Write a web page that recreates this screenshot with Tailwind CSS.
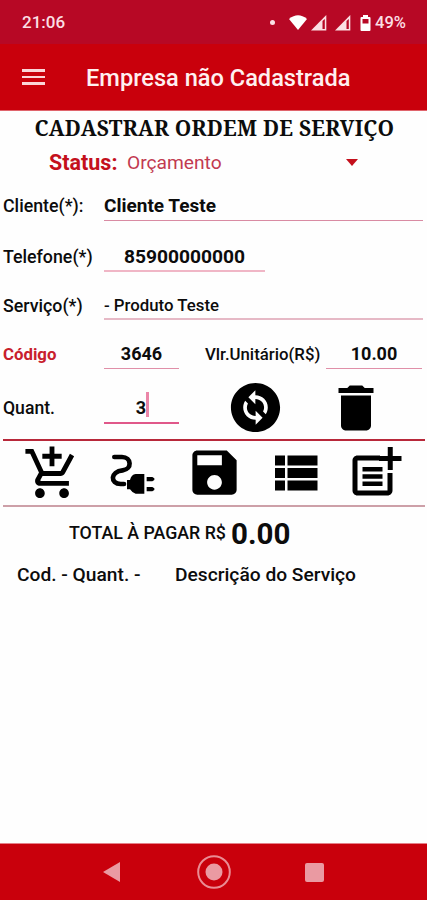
<!DOCTYPE html>
<html lang="pt-BR">
<head>
<meta charset="utf-8">
<title>Ordem de Serviço</title>
<script src="https://cdn.jsdelivr.net/npm/@tailwindcss/browser@4"></script>
</head>
<body class="bg-white">
<div class="flex h-[900px] w-[427px] flex-col overflow-hidden whitespace-nowrap bg-[#fefefe] font-['Roboto',sans-serif] text-[18px] font-medium text-[#0c0c0c]">
  <!-- status bar -->
  <div class="flex h-11 items-center bg-[#b70825] pl-[22px] pt-[2px] text-[#fbdfe4]">
    <span class="w-[248px] text-[17px]">21:06</span>
    <span class="mt-[-2px] size-[5px] rounded-full bg-[#fbdfe4]"></span>
    <svg class="ml-[13.500px] mt-[-1px] h-[15px] w-[18px]" viewBox="0 0 18 15" fill="#fff"><path d="M0 4Q9-3.500 18 4L9 15z"/></svg>
    <svg class="ml-[4.500px] mt-[-1px] h-[16px] w-[16px]" viewBox="0 0 16 16"><path d="M0 15.500L15.300 0V15.500z" fill="#fbdfe4"/><path d="M11.500 6L13.800 4V14H11.500z" fill="#b70825"/></svg>
    <svg class="ml-[8px] mt-[-1px] h-[16px] w-[16px]" viewBox="0 0 16 16"><path d="M0 15.500L15.300 0V15.500z" fill="#fbdfe4"/><path d="M11.500 6L13.800 4V14H11.500z" fill="#b70825"/></svg>
    <svg class="ml-[9px] mt-[-1px] h-[16px] w-[11px]" viewBox="0 0 11 16"><path d="M3 0h5v2h1.500a1 1 0 0 1 1 1v12a1 1 0 0 1-1 1h-8a1 1 0 0 1-1-1V3a1 1 0 0 1 1-1H3z" fill="#fff"/><path d="M2.500 4h6v4.500h-6z" fill="#b70825"/></svg>
    <span class="ml-[4px] text-[16.500px]">49%</span>
  </div>
  <!-- app bar -->
  <div class="flex h-[66px] items-center bg-[#c9000c] pl-[22px] pt-[2px]">
    <div class="mt-[-2px] flex w-[64px] flex-col gap-[4px]">
      <i class="h-[2.500px] w-[23px] bg-[#fbd5d8]"></i>
      <i class="h-[2.500px] w-[23px] bg-[#fbd5d8]"></i>
      <i class="h-[2.500px] w-[23px] bg-[#fbd5d8]"></i>
    </div>
    <span class="pt-[2px] text-[23.600px] text-[#fff0f0]">Empresa não Cadastrada</span>
  </div>
  <h1 class="h-[36px] border-t border-[#e0646c] pl-[34.500px] font-['Noto_Serif','Liberation_Serif',serif] text-[21px] font-bold leading-[35px] tracking-[0.230px]">CADASTRAR ORDEM DE SERVIÇO</h1>
  <div class="flex h-[33px] items-center pl-[49px]">
    <span class="w-[78px] pt-px text-[21.500px] font-bold text-[#c4101c]">Status:</span>
    <span class="w-[219px] pt-px text-[19.200px] font-normal text-[#c23a50]">Orçamento</span>
    <svg class="mt-[-1px] h-[7px] w-[12px]" viewBox="0 0 12 6" preserveAspectRatio="none"><path d="M0 0h12L6 6z" fill="#c4101c"/></svg>
  </div>
  <!-- form rows -->
  <div class="flex h-[42px] items-end pl-[3px]">
    <label class="w-[101px] text-[17.800px] leading-[31px]">Cliente(*):</label>
    <div class="w-[319px] border-b border-[#d98ba3] text-[19px] font-bold leading-[28px]">Cliente Teste</div>
  </div>
  <div class="flex h-[51px] items-end pl-[3px]">
    <label class="w-[101px] text-[17.800px] leading-[31px]">Telefone(*)</label>
    <div class="w-[161px] border-b-2 border-[#f0b6c6] text-center text-[19.200px] font-bold leading-[27px]">85900000000</div>
  </div>
  <div class="flex h-[48px] items-end pl-[3px]">
    <label class="w-[101px] text-[17.800px] leading-[28px]">Serviço(*)</label>
    <div class="w-[319px] border-b-2 border-[#e6b9c6] text-[16.800px] leading-[25px]">- Produto Teste</div>
  </div>
  <div class="flex h-[49px] items-end pl-[3px]">
    <label class="w-[101px] text-[16.800px] font-bold leading-[30px] text-[#c8202c]">Código</label>
    <div class="w-[75px] border-b border-[#e08fa8] text-center text-[18px] font-bold leading-[29px]">3646</div>
    <label class="ml-[26px] w-[121px] text-[16.800px] leading-[30px]">Vlr.Unitário(R$)</label>
    <div class="w-[96px] border-b border-[#e08fa8] text-center text-[18px] font-bold leading-[29px]">10.00</div>
  </div>
  <div class="ml-[3px] flex h-[72px] w-[422px] items-start border-b-2 border-[#b8283a]">
    <label class="w-[101px] pt-[24px] text-[17.600px] leading-[30px]">Quant.</label>
    <div class="mt-[20px] flex h-[35px] w-[75px] items-center justify-center border-b-2 border-[#e0588a] text-[18px] font-bold leading-[30px]"><span class="pl-[2px] pt-[5px]">3</span><i class="mb-[2px] h-[25px] w-[3px] bg-[#eb86a8]"></i></div>
    <svg class="ml-[46.500px] mt-[9px] size-[59px]" viewBox="0 0 24 24" fill="#000"><path d="M12 2C6.480 2 2 6.480 2 12s4.480 10 10 10 10-4.480 10-10S17.520 2 12 2zm.06 17v-2.010H12c-1.280 0-2.560-.490-3.540-1.460-1.710-1.710-1.920-4.350-.640-6.290l1.100 1.100c-.710 1.330-.530 3.010.590 4.130.700.700 1.620 1.030 2.540 1.010v-2.140l2.830 2.830L12.060 19zm4.110-4.240l-1.100-1.100c.710-1.330.530-3.010-.590-4.130C13.790 8.840 12.900 8.500 12 8.500h-.060v2.150L9.110 7.830 11.940 5v2.020c1.300-.020 2.610.450 3.600 1.450 1.700 1.700 1.910 4.350.630 6.290z"/></svg>
    <svg class="ml-[41px] mt-[8.500px] size-[60px]" viewBox="0 0 24 24" fill="#000"><path d="M6 19c0 1.100.900 2 2 2h8c1.100 0 2-.900 2-2V7H6v12zM19 4h-3.500l-1-1h-5l-1 1H5v2h14V4z"/></svg>
  </div>
  <!-- actions -->
  <div class="ml-[3px] flex h-[66px] w-[422px] items-start border-b-2 border-[#cda0a8] pl-[19.500px] pt-[3px]">
    <svg class="h-[59px] w-[58px]" viewBox="0 0 24 24" preserveAspectRatio="none" fill="#000"><path d="M11 9h2V6h3V4h-3V1h-2v3H8v2h3v3zm-4 9c-1.100 0-1.990.900-1.990 2S5.900 22 7 22s2-.900 2-2-.900-2-2-2zm10 0c-1.100 0-1.990.900-1.990 2s.890 2 1.990 2 2-.900 2-2-.900-2-2-2zm-9.830-3.250l.030-.120.900-1.630h7.450c.750 0 1.410-.410 1.750-1.030l3.860-7.010L19.420 4h-.010l-1.100 2-2.760 5H8.530l-.130-.270L6.160 6l-.950-2-.940-2H1v2h2l3.600 7.590-1.350 2.450c-.160.280-.250.610-.250.960 0 1.100.900 2 2 2h12v-2H7.420c-.130 0-.250-.110-.250-.250z"/></svg>
    <svg class="ml-[28.500px] mt-[6px] h-[44px] w-[46px]" viewBox="0 0 138 132"><path d="M16 21H39C68 21 70 58 41 61C3 65 3 101 35 102H45" fill="none" stroke="#000" stroke-width="14" stroke-linecap="round"/><path d="M54 90H63Q67 74 80 72H106V131H80Q69 128 63 118H54z" fill="#000"/><path d="M113 81h17l6 4v5l-6 4h-17zM113 111h17l6 4v5l-6 4h-17z" fill="#000"/></svg>
    <svg class="ml-[29.500px] mt-[-1px] size-[59px]" viewBox="0 0 24 24" fill="#000"><path d="M17 3H5c-1.110 0-2 .900-2 2v14c0 1.100.890 2 2 2h14c1.100 0 2-.900 2-2V7l-4-4zm-5 16c-1.660 0-3-1.340-3-3s1.340-3 3-3 3 1.340 3 3-1.340 3-3 3zm3-10H5V5h10v4z"/></svg>
    <svg class="ml-[21px] mt-[-1px] size-[60px]" viewBox="0 0 24 24" fill="#000"><path d="M4 14h4v-4H4v4zm0 5h4v-4H4v4zM4 9h4V5H4v4zm5 5h12v-4H9v4zm0 5h12v-4H9v4zM9 5v4h12V5H9z"/></svg>
    <svg class="ml-[20px] size-[60px]" viewBox="0 0 24 24" fill="#000"><path d="M17 19H5V7h9V5H5c-1.100 0-2 .900-2 2v12c0 1.100.900 2 2 2h12c1.100 0 2-.900 2-2v-7h-2z" transform="translate(0 -.4)"/><path d="M19.500 1.400h-2v3.600h-3.500v2h3.500v3.600h2V7H23V5h-3.500z" transform="translate(-.4 -.2)"/><path d="M7 9.200h8v1.800H7zM7 12.100h8v1.800H7zM7 15h8v1.800H7z"/></svg>
  </div>
  <div class="flex h-[51px] items-center pl-[69px] pt-[2px]">
    <span class="w-[162px] text-[17.800px]">TOTAL À PAGAR R$</span>
    <span class="pt-px text-[29.500px] font-bold">0.00</span>
  </div>
  <div class="flex h-[34px] items-center pl-[17px]">
    <span class="w-[158px] text-[19.200px]">Cod. - Quant. -</span>
    <span class="text-[19.200px]">Descrição do Serviço</span>
  </div>
  <!-- navigation bar -->
  <div class="mt-auto flex h-[57px] items-center border-t border-[#e58088] bg-[#c9000c] pl-[103px]">
    <svg class="h-[20px] w-[17px]" viewBox="0 0 17 20"><path d="M0 10L17 0V20z" fill="#ea9aa2"/></svg>
    <svg class="ml-[77px] size-[34px]" viewBox="0 0 34 34"><circle cx="17" cy="17" r="15.800" fill="none" stroke="#ea8c94" stroke-width="2"/><circle cx="17" cy="17" r="8.500" fill="#ea9aa2"/></svg>
    <i class="ml-[74px] size-[19px] rounded-[2px] bg-[#ea9aa2]"></i>
  </div>
</div>
</body>
</html>
